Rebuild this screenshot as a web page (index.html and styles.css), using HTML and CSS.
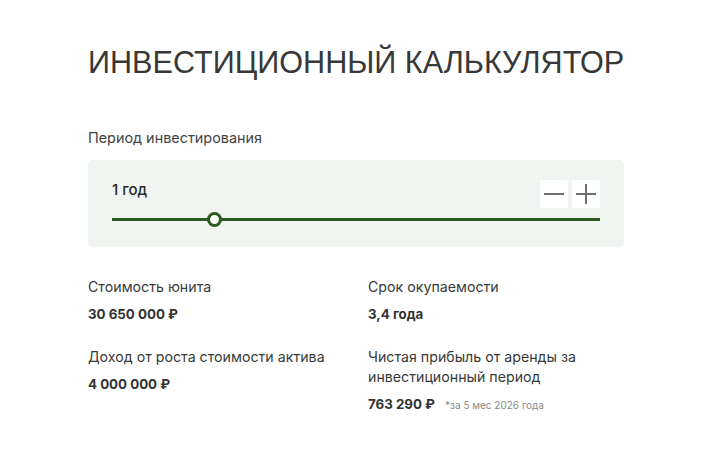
FILE: index.html
```html
<!DOCTYPE html>
<html lang="ru">
<head>
<meta charset="utf-8">
<title>Инвестиционный калькулятор</title>
<link rel="stylesheet" href="styles.css">
</head>
<body>
<main class="calc">
  <h1 class="calc__title">ИНВЕСТИЦИОННЫЙ КАЛЬКУЛЯТОР</h1>
  <div class="calc__label">Период инвестирования</div>
  <section class="period">
    <div class="period__head">
      <span class="period__value">1 год</span>
      <div class="period__controls">
        <button class="step" aria-label="Уменьшить">
          <svg width="20" height="20" viewBox="0 0 20 20"><path d="M0 10H20" stroke="#6e6e6e" stroke-width="2"/></svg>
        </button>
        <button class="step" aria-label="Увеличить">
          <svg width="20" height="20" viewBox="0 0 20 20"><path d="M0 10H20M10 0V20" stroke="#6e6e6e" stroke-width="2"/></svg>
        </button>
      </div>
    </div>
    <div class="slider">
      <div class="slider__track"></div>
      <div class="slider__thumb" style="left: 102px"></div>
    </div>
  </section>
  <div class="stats">
    <div class="stat">
      <div class="stat__label">Стоимость юнита</div>
      <div class="stat__value">30 650 000 ₽</div>
    </div>
    <div class="stat">
      <div class="stat__label">Срок окупаемости</div>
      <div class="stat__value">3,4 года</div>
    </div>
    <div class="stat">
      <div class="stat__label">Доход от роста стоимости актива</div>
      <div class="stat__value">4 000 000 ₽</div>
    </div>
    <div class="stat">
      <div class="stat__label">Чистая прибыль от аренды за<br>инвестиционный период</div>
      <div class="stat__value">763 290 ₽ <span class="stat__note">*за 5 мес 2026 года</span></div>
    </div>
  </div>
</main>
</body>
</html>
```
FILE: styles.css
```css
* { box-sizing: border-box; }

body {
  margin: 0;
  background: #ffffff;
  color: #333333;
  font-family: "Inter", "Noto Sans", sans-serif;
}

.calc {
  width: 536px;
  margin-left: 88px;
  padding-top: 43px;
}

.calc__title {
  margin: 0;
  font-family: "Liberation Sans", Arial, sans-serif;
  font-weight: 400;
  font-size: 30.6px;
  line-height: 38px;
  color: #383838;
  white-space: nowrap;
}

.calc__label {
  margin-top: 47px;
  font-size: 14.4px;
  line-height: 20px;
  color: #444444;
}

.period {
  margin-top: 12px;
  background: #f0f5f2;
  border-radius: 5px;
  padding: 20px 24px 0;
  height: 87px;
}

.period__head {
  display: flex;
  justify-content: space-between;
  align-items: flex-start;
}

.period__value {
  font-size: 15px;
  line-height: 20px;
  font-weight: 500;
  color: #2a2a2a;
}

.period__controls {
  display: flex;
  gap: 4px;
}

.step {
  width: 28px;
  height: 28px;
  border: 0;
  padding: 0;
  background: #ffffff;
  border-radius: 2px;
  display: flex;
  align-items: center;
  justify-content: center;
}

.slider {
  position: relative;
  margin-top: 10px;
  height: 2px;
}

.slider__track {
  height: 3px;
  background: #2d5a1f;
}

.slider__thumb {
  position: absolute;
  top: -6px;
  width: 15px;
  height: 15px;
  margin-left: -7px;
  border-radius: 50%;
  background: #ffffff;
  border: 3px solid #2d5a1f;
}

.stats {
  display: grid;
  grid-template-columns: 280px 1fr;
  row-gap: 23px;
  margin-top: 30px;
}

.stat__label {
  font-size: 14.2px;
  line-height: 20px;
  color: #3a3a3a;
}

.stat__value {
  margin-top: 7px;
  font-size: 13.3px;
  line-height: 20px;
  font-weight: 700;
  color: #333333;
}

.stat__note {
  margin-left: 7px;
  font-size: 10px;
  font-weight: 400;
  color: #8a8a8a;
}
```
